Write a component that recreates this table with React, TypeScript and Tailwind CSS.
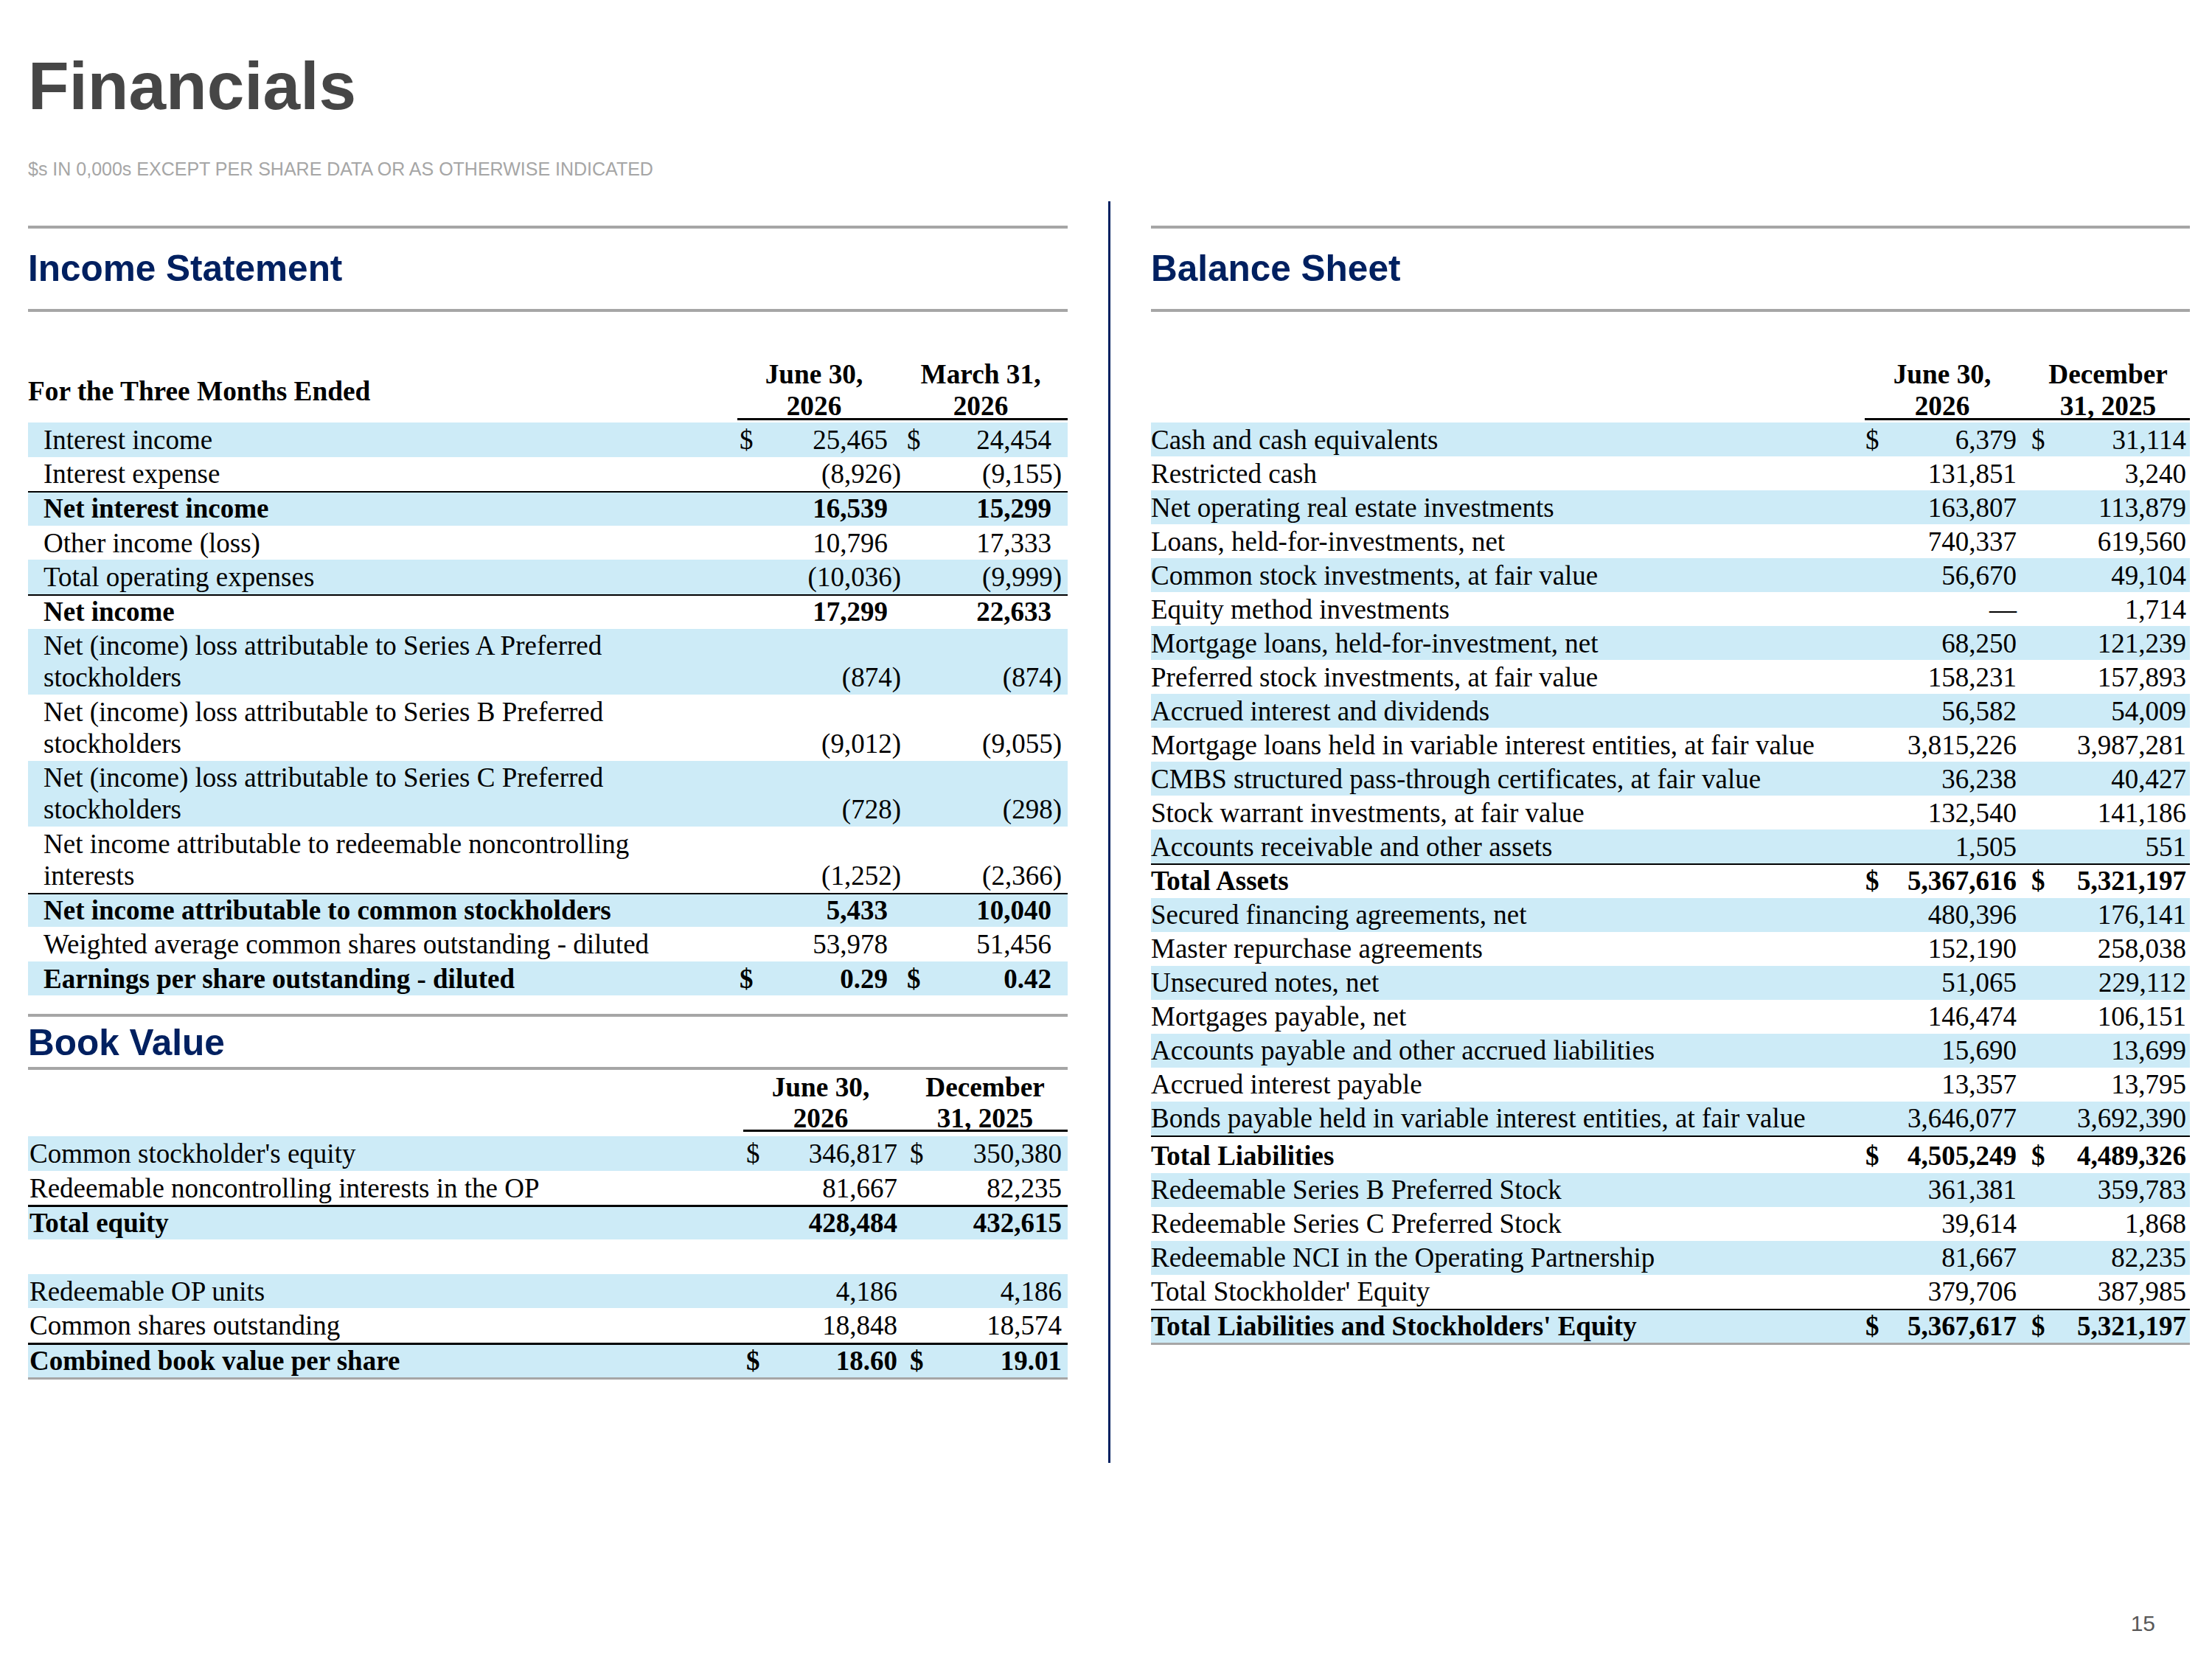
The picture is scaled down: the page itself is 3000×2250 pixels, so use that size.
import React from "react";

const serif = "font-['Liberation_Serif','Times_New_Roman',serif]";
const sans = "font-['Liberation_Sans',Arial,sans-serif]";

type Row = {
  label: string[];
  a: string;
  b: string;
  blue?: boolean;
  bold?: boolean;
  line?: boolean;
  dollar?: boolean;
  extra?: string;
};

type Col = { head: string; dollar: string; paren: string; pos: string };

type Cfg = {
  grid: string;
  label: string;
  row: string;
  lineRow: string;
  headBox: string;
  cols: Col[];
};

const incomeCfg: Cfg = {
  grid: "grid-cols-[962px_228px_220px]",
  label: "pl-[21px]",
  row: "leading-[43px] py-[1.75px]",
  lineRow: "leading-[43px] border-t-2 border-black pt-0 pb-[1.75px]",
  headBox: "h-[84px] leading-[43px]",
  cols: [
    { head: "pr-[20px]", dollar: "pl-[3px]", paren: "pr-[6px]", pos: "pr-[24px]" },
    { head: "pr-[16px]", dollar: "pl-[2px]", paren: "pr-[8px]", pos: "pr-[22px]" },
  ],
};

const bookCfg: Cfg = {
  grid: "grid-cols-[970px_222px_218px]",
  label: "pl-[2px]",
  row: "leading-[43px] py-[1.75px]",
  lineRow: "leading-[43px] border-t-[3px] border-black pt-0 pb-[1px]",
  headBox: "h-[81px] leading-[42px]",
  cols: [
    { head: "pr-[12px]", dollar: "pl-[4px]", paren: "pr-[6px]", pos: "pr-[13px]" },
    { head: "pr-[6px]", dollar: "pl-[4px]", paren: "pr-[4px]", pos: "pr-[8px]" },
  ],
};

const balanceCfg: Cfg = {
  grid: "grid-cols-[968px_224px_217px]",
  label: "pl-0",
  row: "leading-[43px] py-[1.5px]",
  lineRow: "leading-[43px] border-t-2 border-black pt-0 pb-[1.5px]",
  headBox: "h-[84px] leading-[43px]",
  cols: [
    { head: "pr-[14px]", dollar: "pl-[1px]", paren: "pr-[6px]", pos: "pr-[18px]" },
    { head: "pr-[5px]", dollar: "pl-[2px]", paren: "pr-[2px]", pos: "pr-[5px]" },
  ],
};

const income: Row[] = [
  { label: ["Interest income"], a: "25,465", b: "24,454", blue: true, dollar: true },
  { label: ["Interest expense"], a: "(8,926)", b: "(9,155)" },
  { label: ["Net interest income"], a: "16,539", b: "15,299", blue: true, bold: true, line: true },
  { label: ["Other income (loss)"], a: "10,796", b: "17,333" },
  { label: ["Total operating expenses"], a: "(10,036)", b: "(9,999)", blue: true },
  { label: ["Net income"], a: "17,299", b: "22,633", bold: true, line: true },
  { label: ["Net (income) loss attributable to Series A Preferred", "stockholders"], a: "(874)", b: "(874)", blue: true },
  { label: ["Net (income) loss attributable to Series B Preferred", "stockholders"], a: "(9,012)", b: "(9,055)" },
  { label: ["Net (income) loss attributable to Series C Preferred", "stockholders"], a: "(728)", b: "(298)", blue: true },
  { label: ["Net income attributable to redeemable noncontrolling", "interests"], a: "(1,252)", b: "(2,366)" },
  { label: ["Net income attributable to common stockholders"], a: "5,433", b: "10,040", blue: true, bold: true, line: true },
  { label: ["Weighted average common shares outstanding - diluted"], a: "53,978", b: "51,456" },
  { label: ["Earnings per share outstanding - diluted"], a: "0.29", b: "0.42", blue: true, bold: true, dollar: true },
];

const book: Row[] = [
  { label: ["Common stockholder's equity"], a: "346,817", b: "350,380", blue: true, dollar: true },
  { label: ["Redeemable noncontrolling interests in the OP"], a: "81,667", b: "82,235" },
  { label: ["Total equity"], a: "428,484", b: "432,615", blue: true, bold: true, line: true },
  { label: ["\u00a0"], a: "", b: "" },
  { label: ["Redeemable OP units"], a: "4,186", b: "4,186", blue: true },
  { label: ["Common shares outstanding"], a: "18,848", b: "18,574" },
  { label: ["Combined book value per share"], a: "18.60", b: "19.01", blue: true, bold: true, line: true, dollar: true },
];

const balance: Row[] = [
  { label: ["Cash and cash equivalents"], a: "6,379", b: "31,114", blue: true, dollar: true },
  { label: ["Restricted cash"], a: "131,851", b: "3,240" },
  { label: ["Net operating real estate investments"], a: "163,807", b: "113,879", blue: true },
  { label: ["Loans, held-for-investments, net"], a: "740,337", b: "619,560" },
  { label: ["Common stock investments, at fair value"], a: "56,670", b: "49,104", blue: true },
  { label: ["Equity method investments"], a: "\u2014", b: "1,714" },
  { label: ["Mortgage loans, held-for-investment, net"], a: "68,250", b: "121,239", blue: true },
  { label: ["Preferred stock investments, at fair value"], a: "158,231", b: "157,893" },
  { label: ["Accrued interest and dividends"], a: "56,582", b: "54,009", blue: true },
  { label: ["Mortgage loans held in variable interest entities, at fair value"], a: "3,815,226", b: "3,987,281" },
  { label: ["CMBS structured pass-through certificates, at fair value"], a: "36,238", b: "40,427", blue: true },
  { label: ["Stock warrant investments, at fair value"], a: "132,540", b: "141,186" },
  { label: ["Accounts receivable and other assets"], a: "1,505", b: "551", blue: true },
  { label: ["Total Assets"], a: "5,367,616", b: "5,321,197", bold: true, line: true, dollar: true },
  { label: ["Secured financing agreements, net"], a: "480,396", b: "176,141", blue: true },
  { label: ["Master repurchase agreements"], a: "152,190", b: "258,038" },
  { label: ["Unsecured notes, net"], a: "51,065", b: "229,112", blue: true },
  { label: ["Mortgages payable, net"], a: "146,474", b: "106,151" },
  { label: ["Accounts payable and other accrued liabilities"], a: "15,690", b: "13,699", blue: true },
  { label: ["Accrued interest payable"], a: "13,357", b: "13,795" },
  { label: ["Bonds payable held in variable interest entities, at fair value"], a: "3,646,077", b: "3,692,390", blue: true },
  { label: ["Total Liabilities"], a: "4,505,249", b: "4,489,326", bold: true, line: true, dollar: true, extra: "pt-[4px] pb-[2px]" },
  { label: ["Redeemable Series B Preferred Stock"], a: "361,381", b: "359,783", blue: true },
  { label: ["Redeemable Series C Preferred Stock"], a: "39,614", b: "1,868" },
  { label: ["Redeemable NCI in the Operating Partnership"], a: "81,667", b: "82,235", blue: true },
  { label: ["Total Stockholder' Equity"], a: "379,706", b: "387,985" },
  { label: ["Total Liabilities and Stockholders' Equity"], a: "5,367,617", b: "5,321,197", blue: true, bold: true, line: true, dollar: true },
];

function Section({ title, first }: { title: string; first?: boolean }) {
  return (
    <div className={first ? "" : "mt-[25px]"}>
      <div className="h-[4px] bg-[#a6a6a6]" />
      <h2
        className={`${sans} font-bold text-[49.5px] leading-none text-[#002060] ${
          first ? "mt-[29px]" : "mt-[10px]"
        }`}
      >
        {title}
      </h2>
      <div className={`h-[4px] bg-[#a6a6a6] ${first ? "mt-[30.5px]" : "mt-[8.5px]"}`} />
    </div>
  );
}

function Num({ value, dollar, col }: { value: string; dollar?: boolean; col: Col }) {
  const paren = value.endsWith(")");
  return (
    <div className="flex justify-between whitespace-nowrap">
      <span className={col.dollar}>{dollar ? "$" : ""}</span>
      <span className={paren ? col.paren : col.pos}>{value}</span>
    </div>
  );
}

function Table({
  cfg,
  rows,
  heads,
  caption,
  headTop,
  rowsTop,
}: {
  cfg: Cfg;
  rows: Row[];
  heads: string[][];
  caption?: string;
  headTop: string;
  rowsTop: string;
}) {
  return (
    <div className={`${serif} text-black`}>
      <div className={`grid ${cfg.grid} font-bold text-[37.3px] ${headTop}`}>
        <div className="pt-[23px] leading-[43px]">{caption}</div>
        {heads.map((h, i) => (
          <div
            key={i}
            className={`${cfg.headBox} border-b-[3px] border-black text-center ${cfg.cols[i].head}`}
          >
            {h[0]}
            <br />
            {h[1]}
          </div>
        ))}
      </div>
      <div className={rowsTop}>
        {rows.map((r, i) => (
          <div
            key={i}
            className={`grid ${cfg.grid} items-end text-[37px] ${r.line ? cfg.lineRow : cfg.row} ${
              r.extra ?? ""
            } ${r.blue ? "bg-[#cdebf7]" : "bg-white"} ${r.bold ? "font-bold" : ""}`}
          >
            <div className={cfg.label}>
              {r.label.map((l, j) => (
                <div key={j}>{l}</div>
              ))}
            </div>
            <Num value={r.a} dollar={r.dollar} col={cfg.cols[0]} />
            <Num value={r.b} dollar={r.dollar} col={cfg.cols[1]} />
          </div>
        ))}
      </div>
    </div>
  );
}

export default function App() {
  return (
    <div className="w-[3000px] h-[2250px] bg-white flex flex-col">
      <div className="pl-[38px] pt-[71px]">
        <h1 className={`${sans} font-bold text-[91px] leading-none text-[#464646]`}>Financials</h1>
        <p className={`${sans} mt-[55px] text-[25px] leading-none text-[#a6a6a6]`}>
          $s IN 0,000s EXCEPT PER SHARE DATA OR AS OTHERWISE INDICATED
        </p>
      </div>

      <div className="flex items-start mt-[31px] pl-[38px]">
        <div className="w-[1410px] pt-[33px]">
          <Section title="Income Statement" first />
          <Table
            cfg={incomeCfg}
            rows={income}
            heads={[
              ["June 30,", "2026"],
              ["March 31,", "2026"],
            ]}
            caption="For the Three Months Ended"
            headTop="mt-[63px]"
            rowsTop="mt-[3px]"
          />
          <Section title="Book Value" />
          <div>
            <Table
              cfg={bookCfg}
              rows={book}
              heads={[
                ["June 30,", "2026"],
                ["December", "31, 2025"],
              ]}
              headTop="mt-[3px]"
              rowsTop="mt-[6px]"
            />
            <div className="h-[3px] bg-[#a6a6a6]" />
          </div>
        </div>

        <div className="ml-[55px] w-[3px] h-[1711px] bg-[#002060]" />

        <div className="ml-[55px] w-[1409px] pt-[33px]">
          <Section title="Balance Sheet" first />
          <Table
            cfg={balanceCfg}
            rows={balance}
            heads={[
              ["June 30,", "2026"],
              ["December", "31, 2025"],
            ]}
            headTop="mt-[63px]"
            rowsTop="mt-[3px]"
          />
          <div className="h-[3px] bg-[#a6a6a6]" />
        </div>
      </div>

      <div className="mt-auto flex justify-end pr-[77px] pb-[33px]">
        <span className={`${sans} text-[30px] leading-none text-[#595959]`}>15</span>
      </div>
    </div>
  );
}
